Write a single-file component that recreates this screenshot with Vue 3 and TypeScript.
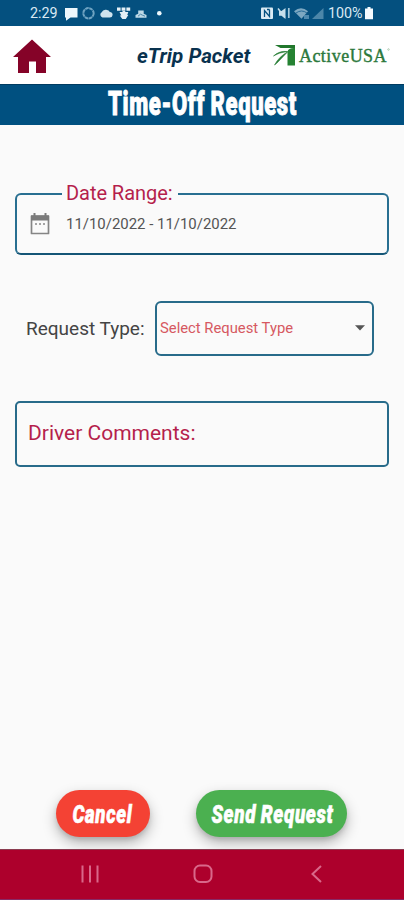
<script setup lang="ts">
import { ref } from 'vue'

const dateRange = ref<string>('11/10/2022 - 11/10/2022')
const requestType = ref<string>('Select Request Type')
</script>

<template>
  <div class="screen">
    <div class="status">
      <span class="clock">2:29</span>
      <svg class="status-left" width="104" height="26" viewBox="60 0 104 26">
        <path d="M65 8h12.500v9.500h-7l-4.500 3.200v-3.200h-1z" fill="#eef7fc" />
        <circle cx="88.500" cy="13.300" r="5.200" fill="none" stroke="#6fa3c2" stroke-width="2" stroke-dasharray="3.600 .5" />
        <path d="M102.500 17.500a2.900 2.900 0 0 1-.8-5.300q1.300-3 4.500-2.500 3 .2 3.600 2.200 3 .3 2.800 3-.3 2.500-2.800 2.600z" fill="#cfe3ee" />
        <path d="M117 7.500h3.600v3.300H117zm4.600 0h3.800v3.300h-3.800zm4.800 0h3.800v3.300h-3.800zM119.500 12h3v-1h2.800v1h3l-1 3h1l-2.500 4h-3.500l-2.500-3.500h1.500z" fill="#e5f0f6" />
        <path d="M135.500 17.800v-2.800l2.700-1.200v-3.300h5.500v3.300l2.800 1.200v2.800z" fill="#bed9e7" />
        <path d="M138 16.200l2.500-2 2 1 2.500 1" stroke="#4b86a9" fill="none" />
        <circle cx="159.300" cy="13.200" r="2.300" fill="#edf7fc" />
      </svg>
      <svg class="status-right" width="66" height="26" viewBox="260 0 66 26">
        <rect x="261" y="7.500" width="12" height="11.500" rx="1" fill="#dcebf4" />
        <path d="M264.500 17v-6.500l5 6V9.500M267 9.500h2.500" fill="none" stroke="#075281" stroke-width="1.300" />
        <path d="M279 11h2.500l4-3v11l-4-3.300H279z" fill="#c6deeb" />
        <path d="M278 8.500l7 9" stroke="#c6deeb" stroke-width="1.500" />
        <path d="M288.800 8v10" stroke="#a4c8dc" stroke-width="1.700" />
        <path d="M294 11.300q7-6 14 0l-6.500 7.500z" fill="#7ca8c2" />
        <path d="M296 13q5.500-4 11 0" fill="none" stroke="#266b97" />
        <path d="M304 15h5v4h-5z" fill="#4f8bb0" />
        <path d="M323.500 8v11H312z" fill="#4c86a9" />
      </svg>
      <span class="percent">100%</span>
      <svg width="10" height="26" viewBox="0 0 10 26"><path d="M3.500 7h3v1.500H9v10.700H1V8.500h2.500z" fill="#f5fbff" /></svg>
    </div>

    <header class="header">
      <svg class="home" width="40" height="36" viewBox="0 0 40 36">
        <path d="M20 .5L39 18H34v16H24V22.500h-7V34H6V18H1z" fill="#850328" />
      </svg>
      <span class="app-name">eTrip Packet</span>
      <svg class="logo" width="118" height="26" viewBox="0 0 118 26">
        <g transform="translate(-.5 1)">
          <path d="M2.500 2h20v3H8z" fill="#21772c" />
          <path d="M15 8.500Q16 4.500 22.500 5V22.500H15z" fill="#258232" />
          <path d="M1 13Q7 7.500 15 8.500Q6 9.500 1 13zM2 22Q7 13 15 9L4.500 20z" fill="#277d35" stroke="#277d35" stroke-width=".6" />
        </g>
        <text x="26" y="19.500" class="logo-text" textLength="88" lengthAdjust="spacingAndGlyphs">ActiveUSA</text>
        <circle cx="115.500" cy="7.500" r=".8" fill="none" stroke="#78a97d" stroke-width=".5" />
      </svg>
    </header>

    <h1 class="title">
      <svg width="200" height="40" viewBox="0 0 200 40">
        <text x="6" y="30" class="display title-text" textLength="189" lengthAdjust="spacingAndGlyphs">Time-Off Request</text>
      </svg>
    </h1>

    <main class="form">
      <fieldset class="date">
        <legend>Date Range:</legend>
        <div class="date-row">
          <svg width="20" height="22" viewBox="0 0 20 22">
            <path d="M1.500 3h17v17.500h-17z" fill="none" stroke="#858585" stroke-width="1.700" stroke-linejoin="round" />
            <path d="M1 2.500h18v5H1z" fill="#7b7b7b" /><path d="M4.500 0v4M15.500 0v4" stroke="#7b7b7b" stroke-width="2" />
            <path d="M5 11h2M9 11h2M13 11h2" stroke="#888" stroke-width="1.600" />
          </svg>
          <span>{{ dateRange }}</span>
        </div>
      </fieldset>
      <div class="type-row">
        <span class="type-label">Request Type:</span>
        <div class="select">
          <span>{{ requestType }}</span>
          <svg width="10" height="6" viewBox="0 0 10 6"><path d="M0 .3h10L5 5.500z" fill="#555" /></svg>
        </div>
      </div>
      <div class="comments">Driver Comments:</div>
    </main>

    <div class="actions">
      <button class="btn cancel" type="button">
        <svg width="80" height="40" viewBox="0 0 80 40"><text x="9.500" y="28.500" class="display btn-text" textLength="60" lengthAdjust="spacingAndGlyphs">Cancel</text></svg>
      </button>
      <button class="btn send" type="button">
        <svg width="140" height="40" viewBox="0 0 140 40"><text x="9.500" y="28.500" class="display btn-text" textLength="122" lengthAdjust="spacingAndGlyphs">Send Request</text></svg>
      </button>
    </div>

    <nav class="navbar">
      <svg width="404" height="49" viewBox="0 0 404 49" fill="none" stroke="#d9688a" stroke-width="2">
        <path d="M82.500 15.500v17M90 15.500v17M97.500 15.500v17" />
        <rect x="194.500" y="15.500" width="17" height="16.500" rx="5.500" />
        <path d="M321 16l-8.500 8 8.500 8" />
      </svg>
    </nav>
  </div>
</template>

<style>
body { background: #fafafa; }
</style>

<style scoped>
.screen { width: 404px; height: 900px; display: flex; flex-direction: column; background: #fafafa; font-family: Roboto, sans-serif; overflow: hidden; }
.status { height: 26px; flex: none; display: flex; align-items: center; background: #04507f; color: #d9e9f3; font-size: 14.3px; padding-left: 30px; }
.clock { width: 30px; line-height: 26px; }
.status-left { margin-right: 96px; }
.status-right { margin-right: 2px; }
.percent { width: 36px; }
.header { height: 58px; flex: none; display: flex; align-items: center; background: #fff; padding: 0 13px 0 12px; }
.home { margin-top: 3px; }
.app-name { margin: 2px 0 0 85px; font-size: 20.600px; font-weight: 700; font-style: italic; color: #09324f; white-space: nowrap; }
.logo { margin-left: auto; overflow: visible; }
.logo-text { font-family: "Liberation Serif", serif; font-size: 18.500px; letter-spacing: .5px; fill: #2b783c; stroke: #2b783c; stroke-width: .4px; }
.title { height: 41px; flex: none; margin: 0; display: flex; justify-content: center; background: #005080; border-top: 1px solid #003c61; box-sizing: border-box; }
.title svg, .btn svg { overflow: visible; }
.display { font-family: Roboto, sans-serif; font-weight: 900; fill: #fff; stroke: #fff; letter-spacing: .9px; word-spacing: -1px; font-variant-ligatures: none; }
.title-text { font-size: 32.500px; stroke-width: .9px; }
.form { flex: 1; padding: 57px 15px 0; }
.date { box-sizing: border-box; width: 374px; height: 73px; margin: 0; padding: 0 0 0 13px; border: 2px solid #286f91; border-bottom-color: #145576; border-radius: 6px; color: #545454; }
legend { margin-left: 32px; padding: 0 5px 0 4px; font-size: 20px; line-height: 23px; letter-spacing: -.05px; color: #b51f4c; }
.date-row { display: flex; align-items: center; gap: 16px; height: 22px; margin-top: 8px; font-size: 14.950px; }
.type-row { display: flex; align-items: center; margin-top: 45.500px; padding-left: 11px; }
.type-label { width: 129px; font-size: 19px; color: #444; white-space: nowrap; }
.select { width: 219px; height: 55px; box-sizing: border-box; border: 2px solid #286b8a; border-radius: 6px; display: flex; align-items: center; justify-content: space-between; padding: 0 7px 0 3px; font-size: 14.800px; line-height: 18px; color: #d65861; }
.select span { margin-bottom: 1px; }
.comments { margin-top: 45px; height: 66px; width: 374px; box-sizing: border-box; border: 2px solid #286b8a; border-radius: 5px; padding-left: 11px; font-size: 21px; line-height: 61px; color: #b51f4c; }
.actions { display: flex; gap: 46px; padding: 0 0 12px 56px; }
.btn { height: 47px; border: 0; border-radius: 24px; padding: 0; display: flex; align-items: center; justify-content: center; box-shadow: 0 6px 14px rgba(0, 0, 0, .28), 0 3px 4px rgba(0, 0, 0, .1); }
.cancel { width: 94px; background: #f44234; }
.send { width: 151px; background: #4bb050; }
.btn-text { font-size: 25.500px; stroke-width: .6px; font-style: italic; }
.navbar { height: 51px; flex: none; box-sizing: border-box; background: #ad002c; border-top: 1px solid #8b3c50; border-bottom: 1px solid #872b67; }
.navbar svg { display: block; }
</style>
